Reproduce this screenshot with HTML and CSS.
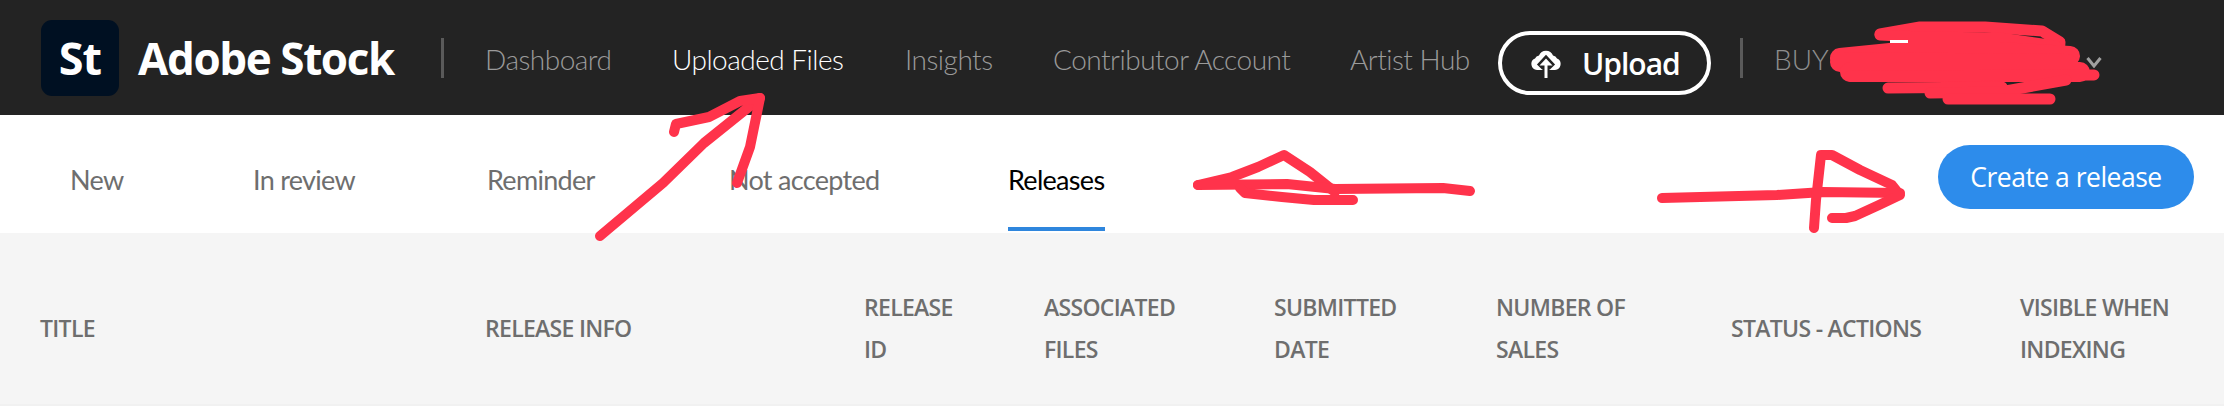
FILE: index.html
```html
<!DOCTYPE html>
<html lang="en">
<head>
    <meta charset="UTF-8">
    <meta name="viewport" content="width=device-width, initial-scale=1.0">
    <title>Adobe Stock - Releases</title>
    <link rel="stylesheet" href="styles.css">
</head>
<body>
    <div class="page">
        <header class="topbar">
            <a class="logo-box">St</a>
            <span class="brand">Adobe Stock</span>
            <span class="divider"></span>
            <nav class="main-nav">
                <a class="nav-link">Dashboard</a>
                <a class="nav-link active">Uploaded Files</a>
                <a class="nav-link">Insights</a>
                <a class="nav-link">Contributor Account</a>
                <a class="nav-link">Artist Hub</a>
            </nav>
            <button class="upload-btn" type="button">
                <svg class="upload-icon" viewBox="0 0 32 30" aria-hidden="true">
                    <path class="cloud" d="M7 22A6 6 0 0 1 5 10.500 5 5 0 0 1 9 7.500 7.500 7.500 0 0 1 23 7.500 5 5 0 0 1 27 10.500 6 6 0 0 1 25 22Z"/>
                    <path class="arrow-cut" d="M16 30V13M9.500 19l6.500-7 6.500 7"/>
                    <path class="arrow" d="M16 30V13"/>
                    <path class="arrow-head" d="M16 10.500 9.500 17.500H22.500Z"/>
                </svg>
                <span>Upload</span>
            </button>
            <span class="divider divider-user"></span>
            <span class="user-name">BUY</span>
            <svg class="chevron" viewBox="0 0 16 12" aria-hidden="true"><path d="M1.500 2 8 10l6.500-8"/></svg>
        </header>

        <div class="tabs-row">
            <div class="tabs">
                <a class="tab">New</a>
                <a class="tab">In review</a>
                <a class="tab">Reminder</a>
                <a class="tab">Not accepted</a>
                <a class="tab selected">Releases</a>
            </div>
            <button class="create-btn" type="button">Create a release</button>
        </div>

        <div class="table-head">
            <div>TITLE</div>
            <div>RELEASE INFO</div>
            <div>RELEASE<br>ID</div>
            <div>ASSOCIATED<br>FILES</div>
            <div>SUBMITTED<br>DATE</div>
            <div>NUMBER OF<br>SALES</div>
            <div>STATUS - ACTIONS</div>
            <div>VISIBLE WHEN<br>INDEXING</div>
        </div>

        <!-- red marker scribbles drawn over the screenshot -->
        <svg class="scribbles" viewBox="0 0 2224 416" aria-hidden="true">
            <path d="M600 236 663 183 704 143 760 98"/>
            <path d="M674 132 676 124 709 117 740 101 760 98 750 147 737 183"/>
            <path d="M1198 185 1232 177 1258 167 1284 155 1310 172 1335 192"/>
            <path d="M1198 185 1287 184 1335 189 1443 188 1470 191"/>
            <path d="M1240 188 1245 193 1282 197 1314 200 1353 200"/>
            <path d="M1662 198 1777 195 1823 192 1900 193"/>
            <path d="M1814 228 1816 200 1821 155 1832 155 1860 170 1892 185 1900 195 1879 205 1855 216 1846 218 1832 218"/>
            <path class="mid" d="M1880 34 1920 27 1985 27 2042 31 2060 42 2059 56"/>
            <path class="mid" d="M1880 35 1920 37 2000 38 2056 46"/>
            <path class="thick" d="M1840 58 1900 52 2000 52 2070 56"/>
            <path class="thick" d="M1840 62 2068 64"/>
            <path class="thick" d="M1850 72 2080 72"/>
            <path class="mid" d="M1850 76 2094 75"/>
            <path class="mid" d="M1888 88 2002 87"/>
            <path class="mid" d="M1930 93 2000 92 2066 80"/>
            <path class="mid" d="M1948 99 2050 99"/>
            <rect class="scrap" x="1890" y="40" width="18" height="3"/>
        </svg>
    </div>
</body>
</html>
```

FILE: styles.css
```css
/* Basic styling for the body */
body {
    margin: 0;
    padding: 0;
    background-color: #fff;
    font-family: "Lato", "Open Sans", sans-serif;
}

.page {
    position: relative;
    width: 2224px;
    height: 416px;
    overflow: hidden;
}

/* Top bar */
.topbar {
    display: flex;
    align-items: center;
    height: 115px;
    padding-left: 41px;
    box-sizing: border-box;
    background-color: #232323;
}

.logo-box {
    display: flex;
    align-items: center;
    justify-content: center;
    width: 78px;
    height: 76px;
    border-radius: 11px;
    background-color: #001022;
    color: #fff;
    font-family: "Open Sans", sans-serif;
    font-size: 45px;
    font-weight: 700;
    letter-spacing: -1px;
}

.brand {
    width: 256px;
    margin-left: 19px;
    color: #fff;
    font-family: "Open Sans", sans-serif;
    font-size: 44px;
    font-weight: 700;
    letter-spacing: -1.4px;
    white-space: nowrap;
}

.divider {
    width: 3px;
    height: 40px;
    margin-left: 47px;
    background-color: #5a5a5a;
}

.main-nav {
    display: grid;
    grid-template-columns: 187px 233px 148px 297px 148px;
    margin-left: 41px;
    padding-top: 3px;
}

.nav-link {
    color: #9a9a9a;
    font-size: 28px;
    font-weight: 300;
    letter-spacing: -0.5px;
    white-space: nowrap;
}

.nav-link.active {
    color: #fff;
}

/* Upload button */
.upload-btn {
    display: flex;
    align-items: center;
    gap: 20px;
    width: 213px;
    height: 64px;
    margin-top: 11px;
    padding: 0 0 0 28px;
    box-sizing: border-box;
    border: 4px solid #fff;
    border-radius: 32px;
    background: none;
    color: #fff;
    font-family: "Open Sans", sans-serif;
    font-size: 30px;
    font-weight: 600;
    letter-spacing: -1px;
}

.upload-icon {
    width: 32px;
    height: 30px;
    flex: none;
}

.cloud,
.arrow-head {
    fill: #fff;
}

.arrow-cut {
    fill: none;
    stroke: #232323;
    stroke-width: 7;
}

.arrow {
    fill: none;
    stroke: #fff;
    stroke-width: 3;
}

.divider-user {
    margin-left: 29px;
}

.user-name {
    margin-left: 31px;
    padding-top: 3px;
    color: #8e8e8e;
    font-size: 28px;
    font-weight: 300;
}

.chevron {
    width: 16px;
    height: 12px;
    margin-left: 257px;
    margin-top: 8px;
    fill: none;
    stroke: #a0a0a0;
    stroke-width: 3;
}

/* Tabs */
.tabs-row {
    display: flex;
    align-items: center;
    justify-content: space-between;
    height: 118px;
    padding: 0 30px 0 70px;
    box-sizing: border-box;
}

.tabs {
    display: grid;
    grid-template-columns: 183px 234px 242px 279px 97px;
    align-self: stretch;
    padding-bottom: 2px;
}

.tab {
    display: flex;
    align-items: center;
    padding-top: 16px;
    box-sizing: border-box;
    border-bottom: 4px solid transparent;
    color: #6e6e6e;
    font-size: 27px;
    font-weight: 400;
    letter-spacing: -0.7px;
    white-space: nowrap;
}

.tab.selected {
    border-bottom-color: #2f86dd;
    color: #000;
}

.create-btn {
    width: 256px;
    height: 64px;
    margin-top: 6px;
    padding: 0;
    border: none;
    border-radius: 32px;
    background-color: #2d8ceb;
    color: #fff;
    font-family: "Open Sans", sans-serif;
    font-size: 26.5px;
    letter-spacing: -0.5px;
}

/* Table heading */
.table-head {
    display: grid;
    grid-template-columns: 445px 379px 180px 230px 222px 235px 289px 1fr;
    align-items: center;
    height: 173px;
    padding: 53px 0 34px 40px;
    box-sizing: border-box;
    border-bottom: 2px solid #f1f1f1;
    background-color: #f5f5f5;
    color: #6e6e6e;
    font-family: "Open Sans", sans-serif;
    font-size: 23px;
    font-weight: 600;
    line-height: 42px;
    letter-spacing: -0.7px;
}

/* Marker scribbles */
.scribbles {
    position: absolute;
    top: 0;
    left: 0;
    width: 2224px;
    height: 416px;
}

.scribbles path {
    fill: none;
    stroke: #ff334b;
    stroke-width: 10;
    stroke-linecap: round;
    stroke-linejoin: round;
}

.scribbles path.thick {
    stroke-width: 20;
}

.scribbles path.mid {
    stroke-width: 11;
}

.scrap {
    fill: #fff;
}
```
